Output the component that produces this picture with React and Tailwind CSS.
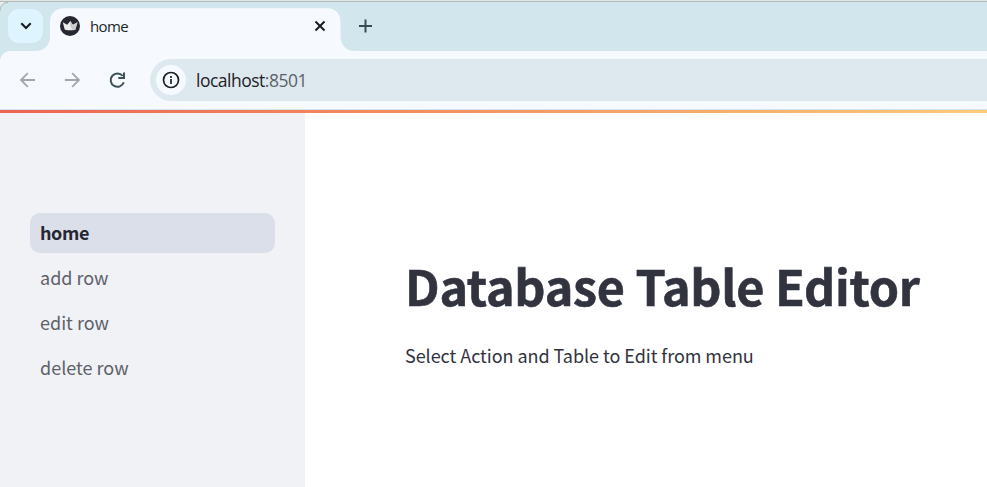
import React from "react";

const pages = ["add row", "edit row", "delete row"];

function TabStrip() {
  return (
    <div className="relative h-[49px] bg-[#d2e6ee] flex items-start">
      <svg className="absolute left-0 top-0" width="400" height="49" viewBox="0 2 400 49" fill="none">
        <path d="M0 2h8C3 3 0 6 0 11z" fill="#e9eeec" />
        <path d="M0 11C0 6 3 2.5 8 2.5" stroke="#aeb4b5" />
        <path d="M36 51C44 51 50 45 50 37V22C50 13.500 55.500 8.300 64 8.300H327C335.500 8.300 340.500 13.500 340.500 22V36C340.500 45 346.500 51 355 51Z" fill="#f6faff" />
      </svg>
      <button className="relative ml-2 mt-[7px] flex h-[34px] w-[35px] items-center justify-center rounded-[11px] bg-[#def4ff]">
        <svg width="12" height="8" viewBox="0 0 12 8" fill="none" stroke="#15191c" strokeWidth="2">
          <path d="M1.300 1.300 6 6l4.700-4.700" />
        </svg>
      </button>
      <div className="relative ml-[17px] mt-[14px] flex h-5 w-[266px] items-center">
        <svg width="20" height="20" viewBox="0 0 20 20">
          <circle cx="10" cy="10" r="10" fill="#262730" />
          <path d="M2.800 6.200 7.200 8.800 10.300 5 12.800 8.800 17.500 6.200 15.400 13.500Q15 14.300 10 14.300 5.300 14.300 4.700 13.500Z" fill="#ededee" />
          <path d="M10.300 5 12.800 8.800 10.500 11Z" fill="#bfc0c2" />
          <path d="M17.500 6.200 15.400 13.500Q15 14.300 13 14.300L10.500 11Z" fill="#c9cacc" />
        </svg>
        <span className="ml-[10px] font-['Open_Sans',sans-serif] text-[15px] leading-5 tracking-[-0.6px] text-[#20252a]">home</span>
        <svg className="ml-auto" width="12" height="12" viewBox="0 0 12 12" fill="none" stroke="#15191c" strokeWidth="1.900">
          <path d="m1.500 1.500 9 9m0-9-9 9" />
        </svg>
      </div>
      <svg className="relative ml-[33px] mt-[17px]" width="14" height="14" viewBox="0 0 14 14" fill="none" stroke="#3a4a52" strokeWidth="2">
        <path d="M6.500 .5v13M0 7h13" />
      </svg>
    </div>
  );
}

function Toolbar() {
  return (
    <div className="bg-[#d2e6ee]">
      <div className="flex h-[58px] items-center rounded-tl-[10px] bg-[#f6faff]">
        <svg className="ml-[18px]" width="62" height="18" viewBox="0 0 62 18" fill="none">
          <path d="M17 9H3m6.800-6.800L3 9l6.800 6.800M47 9h14m-6.800-6.800L61 9l-6.800 6.800" stroke="#a3a7aa" strokeWidth="1.800" />
        </svg>
        <svg className="ml-[28px]" width="18" height="18" viewBox="0 0 18 18" fill="none" stroke="#3d4f57" strokeWidth="2">
          <path d="M14.700 5A6.700 6.700 0 1 0 15.800 11.200" />
          <path d="M16 1.500V7H10.300" />
        </svg>
        <div className="ml-[24px] flex h-[42px] flex-1 items-center rounded-l-full bg-[#dee9ef] pl-[6px]">
          <div className="flex size-[30px] items-center justify-center rounded-full bg-[#f6faff]">
            <svg width="18" height="18" viewBox="0 0 18 18" fill="none" stroke="#1b1f22" strokeWidth="1.700">
              <circle cx="9" cy="9" r="7.500" />
              <path d="M9 8v5M9 5v2" />
            </svg>
          </div>
          <span className="ml-[10px] font-['Open_Sans',sans-serif] text-[17.5px] leading-6 tracking-[-0.5px] text-[#1e2225]">
            localhost<span className="text-[#5a6166]">:8501</span>
          </span>
        </div>
      </div>
    </div>
  );
}

export default function App() {
  return (
    <div className="flex h-[487px] w-[987px] flex-col overflow-hidden bg-white">
      <div className="h-px bg-[#e5e5e3]" />
      <div className="h-px bg-[#b1babd]" />
      <TabStrip />
      <Toolbar />
      <div className="h-px bg-[#d5e3ea]" />
      <div className="h-[3px] bg-[linear-gradient(90deg,#ee6352_0%,#f8bf72_90%,#fbcb7a_100%)]" />
      <div className="flex flex-1 font-['Noto_Sans_CJK_SC',sans-serif]">
        <nav className="w-[305px] bg-[#f0f2f6] px-[30px] pt-[100px] text-[18px] text-[#5e616a]">
          <a className="flex h-10 items-center rounded-[10px] bg-[#dadfe9] pb-[2px] pl-[10px] font-bold tracking-[-0.4px] text-[#262730]">home</a>
          {pages.map((page) => (
            <a key={page} className="mt-[5px] flex h-10 items-center pb-[2px] pl-[10px]">{page}</a>
          ))}
        </nav>
        <main className="pl-[100px] pt-[136px] text-[#31333f]">
          <h1 className="h-[72px] whitespace-nowrap text-[48.5px] font-bold leading-[72px] tracking-[-0.25px] [-webkit-text-stroke:0.6px_#31333f]">Database Table Editor</h1>
          <p className="mt-[18px] whitespace-nowrap text-[18px] leading-8 tracking-[-0.05px]">Select Action and Table to Edit from menu</p>
        </main>
      </div>
    </div>
  );
}
